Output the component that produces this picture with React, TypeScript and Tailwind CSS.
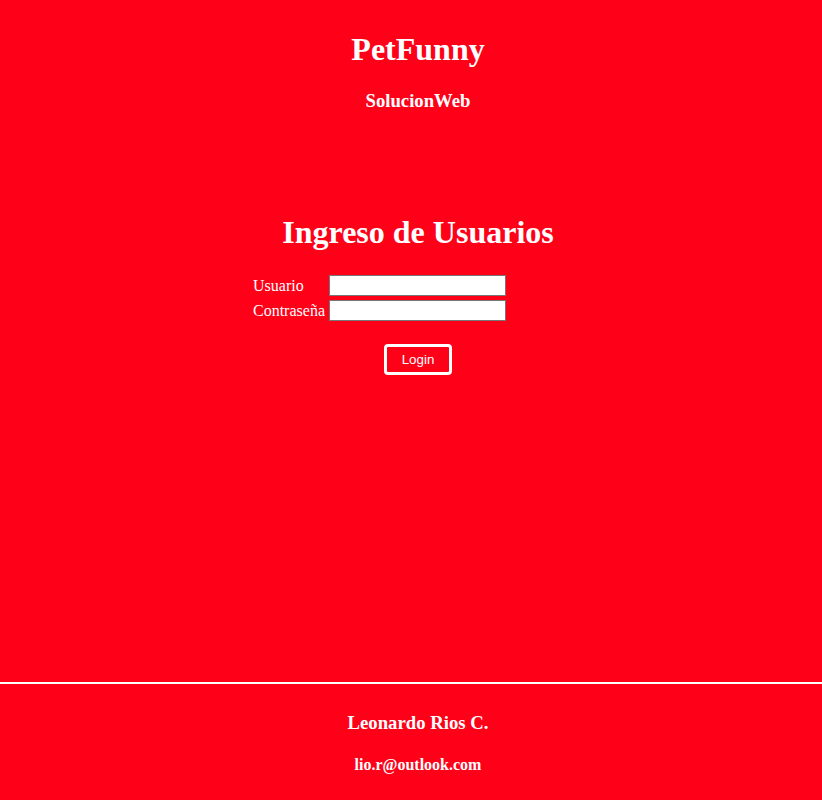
export default function App() {
    return (
        <div className="min-h-screen flex flex-col bg-[#ff0019] text-white font-['Liberation_Serif','Times_New_Roman',serif]">
            {/* Cabecera + formulario */}
            <main className="flex-1 flex flex-col items-center pl-[14px] pt-[31px]">
                <h1 className="text-[32px] leading-[36px] font-bold">PetFunny</h1>
                <h3 className="mt-[23px] text-[18.72px] leading-[22px] font-bold">SolucionWeb</h3>

                <h1 className="mt-[102px] text-[32px] leading-[36px] font-bold">Ingreso de Usuarios</h1>

                <form className="mt-[25px] w-[330px] flex flex-col items-start gap-[4px]">
                    <div className="flex items-center">
                        <label className="w-[76px] text-[16px] leading-[21px]">Usuario</label>
                        <input type="text" className="w-[177px] h-[21px] bg-white border border-[#767676] text-black text-[13px] px-[2px] outline-none" />
                    </div>
                    <div className="flex items-center">
                        <label className="w-[76px] text-[16px] leading-[21px]">Contraseña</label>
                        <input type="password" className="w-[177px] h-[21px] bg-white border border-[#767676] text-black text-[13px] px-[2px] outline-none" />
                    </div>
                </form>

                <button className="mt-[23px] w-[68px] h-[31px] border-[3px] border-white rounded-[4px] font-['Liberation_Sans',Arial,sans-serif] text-[13.33px] text-white">
                    Login
                </button>
            </main>

            {/* Pie */}
            <footer className="flex flex-col">
                <div className="h-[2px] bg-white" />
                <div className="flex flex-col items-center pl-[14px] pt-[28px] pb-[26px]">
                    <h3 className="text-[18.72px] leading-[22px] font-bold">Leonardo Rios C.</h3>
                    <h4 className="mt-[22px] text-[16px] leading-[18px] font-bold">lio.r@outlook.com</h4>
                </div>
            </footer>
        </div>
    );
}
